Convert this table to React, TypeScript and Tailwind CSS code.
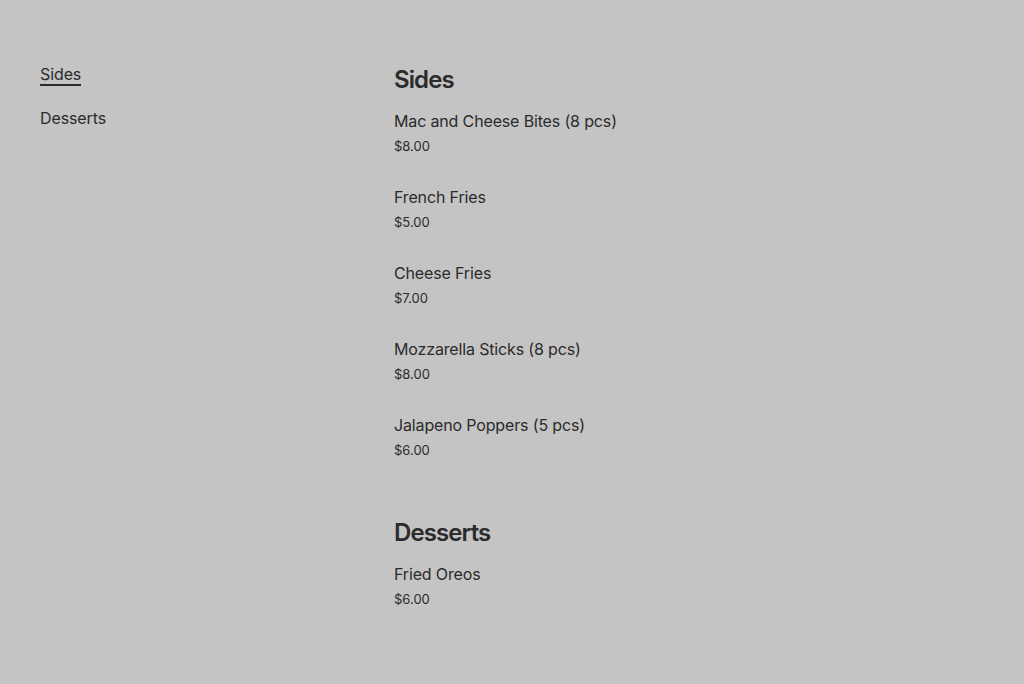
const sections = [
  {
    title: "Sides",
    items: [
      { name: "Mac and Cheese Bites (8 pcs)", price: "$8.00" },
      { name: "French Fries", price: "$5.00" },
      { name: "Cheese Fries", price: "$7.00" },
      { name: "Mozzarella Sticks (8 pcs)", price: "$8.00" },
      { name: "Jalapeno Poppers (5 pcs)", price: "$6.00" },
    ],
  },
  {
    title: "Desserts",
    items: [{ name: "Fried Oreos", price: "$6.00" }],
  },
];

export default function App() {
  return (
    <div
      className="min-h-screen bg-[#c4c4c4] text-[#2b2b2b] px-10 pt-16"
      style={{ fontFamily: "Inter, 'Noto Sans', sans-serif" }}
    >
      <div className="flex">
        <nav className="w-[354px] shrink-0 flex flex-col items-start gap-[22px]">
          <a className="text-[16px] leading-5 border-b-2 border-[#2b2b2b] tracking-[-0.1px]">Sides</a>
          <a className="text-[16px] leading-5 tracking-[-0.1px]">Desserts</a>
        </nav>
        <main className="flex flex-col gap-[57px]">
          {sections.map((s) => (
            <section key={s.title}>
              <h2 className="text-[24px] leading-8 font-semibold tracking-[-0.9px] mb-[13px]">
                {s.title}
              </h2>
              <ul className="flex flex-col gap-[29px]">
                {s.items.map((i) => (
                  <li key={i.name}>
                    <div className="text-[16px] leading-6 tracking-[-0.15px]">{i.name}</div>
                    <div className="text-[13px] leading-5 mt-[3px]">{i.price}</div>
                  </li>
                ))}
              </ul>
            </section>
          ))}
        </main>
      </div>
    </div>
  );
}
